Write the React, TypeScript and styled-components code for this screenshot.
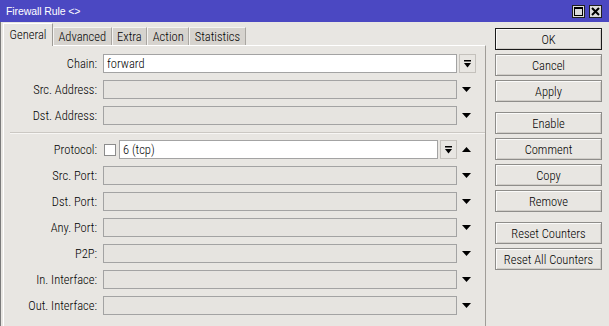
import React from 'react';
import styled, { createGlobalStyle } from 'styled-components';

const FONT = `"Roboto Condensed", "Liberation Sans Narrow", "Liberation Sans", Arial, sans-serif`;
const TITLE_FONT = `"Liberation Sans", Arial, sans-serif`;
const BG = '#E8E6E2';

const Global = createGlobalStyle`
  html, body { margin: 0; padding: 0; background: ${BG}; overflow: hidden; }
  body { font-family: ${FONT}; font-size: 12.5px; font-weight: 300; color: #000; }
  * { box-sizing: border-box; }
`;

const Window = styled.div`
  width: 609px;
  height: 326px;
  display: flex;
  flex-direction: column;
  background: ${BG};
  overflow: hidden;
`;

const TitleBar = styled.div`
  height: 22px;
  flex: none;
  background: #4b48c2;
  color: #fff;
  display: flex;
  align-items: center;
  justify-content: space-between;
  padding: 0 7px 0 6px;
  font-family: ${TITLE_FONT};
  font-weight: 400;
  font-size: 10.5px;
  letter-spacing: -0.1px;
`;

const TitleButtons = styled.div`
  display: flex;
  gap: 4px;
`;

const TitleButton = styled.div`
  width: 13px;
  height: 13px;
  background: #dcdcdc;
  border: 1px solid #202020;
  display: flex;
  align-items: center;
  justify-content: center;
`;

const Body = styled.div`
  flex: 1;
  display: flex;
  min-height: 0;
  border-left: 1px solid #7a7a7a;
`;

const LeftPane = styled.div`
  width: 485px;
  flex: none;
  padding: 1px 0 0 2px;
  display: flex;
  flex-direction: column;
`;

const TabStrip = styled.div`
  height: 22px;
  display: flex;
  align-items: flex-end;
  position: relative;
  z-index: 1;
`;

const Tab = styled.div<{ $active?: boolean }>`
  height: ${(p) => (p.$active ? '23px' : '18px')};
  margin-bottom: ${(p) => (p.$active ? '-1px' : '0')};
  padding: ${(p) => (p.$active ? '3px 5.5px 0 5.5px' : '1px 4.5px 0 4.5px')};
  background: ${(p) => (p.$active ? BG : '#d6d3ce')};
  border-top: 1px solid ${(p) => (p.$active ? '#fff' : '#f4f3f1')};
  border-left: 1px solid ${(p) => (p.$active ? '#fff' : '#f4f3f1')};
  border-right: 1px solid ${(p) => (p.$active ? '#9e9b96' : '#a9a6a1')};
  white-space: nowrap;
`;

const Panel = styled.div`
  flex: 1;
  border-top: 1px solid #fff;
  border-left: 1px solid #fff;
  border-right: 1px solid #a09d98;
  padding-top: 8px;
`;

const Row = styled.div`
  display: flex;
  align-items: center;
  height: 19px;
  margin-bottom: 7px;
`;

const Label = styled.div`
  width: 93px;
  margin-right: 6px;
  text-align: right;
  white-space: nowrap;
`;

const Inputs = styled.div`
  width: 354px;
  height: 19px;
  display: flex;
  align-items: center;
  gap: 2px;
`;

const Aside = styled.div`
  flex: 1;
  height: 19px;
  display: flex;
  align-items: center;
`;

const Field = styled.div<{ $disabled?: boolean }>`
  flex: 1;
  height: 19px;
  border: 1px solid #a3a3a3;
  background: ${(p) => (p.$disabled ? '#e6e4e0' : '#fff')};
  padding-left: 3px;
  line-height: 17px;
  white-space: nowrap;
`;

const Check = styled.div`
  width: 12px;
  height: 12px;
  border: 1px solid #8c8c8c;
  background: #fff;
  margin: 0 1px 0 1px;
  flex: none;
`;

const DropButton = styled.div<{ $offset?: number }>`
  width: 17px;
  height: 19px;
  flex: none;
  margin-left: ${(p) => p.$offset ?? 0}px;
  border: 1px solid #c4c1bc;
  background: ${BG};
  display: flex;
  align-items: center;
  justify-content: center;
`;

const ArrowBox = styled.div`
  margin-left: 5px;
  display: flex;
  align-items: center;
`;

const Separator = styled.div`
  height: 2px;
  margin: 2px 0 6px 6px;
  border-top: 1px solid #cbc8c3;
  border-bottom: 1px solid #f7f6f4;
`;

const RightPane = styled.div`
  padding: 6px 0 0 9px;
  display: flex;
  flex-direction: column;
  width: 116px;
`;

const Button = styled.div<{ $default?: boolean; $groupStart?: boolean }>`
  width: 107px;
  height: 22px;
  margin-bottom: 4px;
  margin-top: ${(p) => (p.$groupStart ? '6px' : '0')};
  border: 1px solid ${(p) => (p.$default ? '#1a1a1a' : '#8e8d8a')};
  box-shadow: inset 1px 1px 0 #fbfbfa, inset -1px -1px 0 #d0cdc8;
  background: ${BG};
  display: flex;
  align-items: center;
  justify-content: center;
  white-space: nowrap;
`;

const DropIcon = () => (
  <svg width="7" height="8" viewBox="0 0 7 8">
    <rect x="0" y="0" width="7" height="1.5" fill="#000" />
    <polygon points="0,3 7,3 3.5,7.5" fill="#000" />
  </svg>
);

const Down = () => (
  <svg width="9" height="5" viewBox="0 0 9 5">
    <polygon points="0,0 9,0 4.5,5" fill="#000" />
  </svg>
);

const Up = () => (
  <svg width="9" height="5" viewBox="0 0 9 5">
    <polygon points="0,5 9,5 4.5,0" fill="#000" />
  </svg>
);

const tabs = ['General', 'Advanced', 'Extra', 'Action', 'Statistics'];
const topRows = ['Src. Address', 'Dst. Address'];
const bottomRows = ['Src. Port', 'Dst. Port', 'Any. Port', 'P2P', 'In. Interface', 'Out. Interface'];

const EmptyRow = ({ label }: { label: string }) => (
  <Row>
    <Label>{label}:</Label>
    <Inputs>
      <Field $disabled />
    </Inputs>
    <Aside>
      <ArrowBox>
        <Down />
      </ArrowBox>
    </Aside>
  </Row>
);

export default function App() {
  return (
    <>
      <Global />
      <Window>
        <TitleBar>
          <span>Firewall Rule &lt;&gt;</span>
          <TitleButtons>
            <TitleButton>
              <svg width="9" height="9" viewBox="0 0 9 9">
                <rect x="0.5" y="0.5" width="8" height="8" fill="none" stroke="#000" />
                <rect x="0" y="0" width="9" height="2" fill="#000" />
              </svg>
            </TitleButton>
            <TitleButton>
              <svg width="9" height="9" viewBox="0 0 9 9">
                <path d="M1 1 L8 8 M8 1 L1 8" stroke="#000" strokeWidth="2" />
              </svg>
            </TitleButton>
          </TitleButtons>
        </TitleBar>
        <Body>
          <LeftPane>
            <TabStrip>
              {tabs.map((t, i) => (
                <Tab key={t} $active={i === 0}>
                  {t}
                </Tab>
              ))}
            </TabStrip>
            <Panel>
              <Row>
                <Label>Chain:</Label>
                <Inputs>
                  <Field>forward</Field>
                </Inputs>
                <Aside>
                  <DropButton $offset={2}>
                    <DropIcon />
                  </DropButton>
                </Aside>
              </Row>
              {topRows.map((r) => (
                <EmptyRow key={r} label={r} />
              ))}
              <Separator />
              <Row>
                <Label>Protocol:</Label>
                <Inputs>
                  <Check />
                  <Field>6 (tcp)</Field>
                  <DropButton>
                    <DropIcon />
                  </DropButton>
                </Inputs>
                <Aside>
                  <ArrowBox>
                    <Up />
                  </ArrowBox>
                </Aside>
              </Row>
              {bottomRows.map((r) => (
                <EmptyRow key={r} label={r} />
              ))}
            </Panel>
          </LeftPane>
          <RightPane>
            <Button $default>OK</Button>
            <Button>Cancel</Button>
            <Button>Apply</Button>
            <Button $groupStart>Enable</Button>
            <Button>Comment</Button>
            <Button>Copy</Button>
            <Button>Remove</Button>
            <Button $groupStart>Reset Counters</Button>
            <Button>Reset All Counters</Button>
          </RightPane>
        </Body>
      </Window>
    </>
  );
}
